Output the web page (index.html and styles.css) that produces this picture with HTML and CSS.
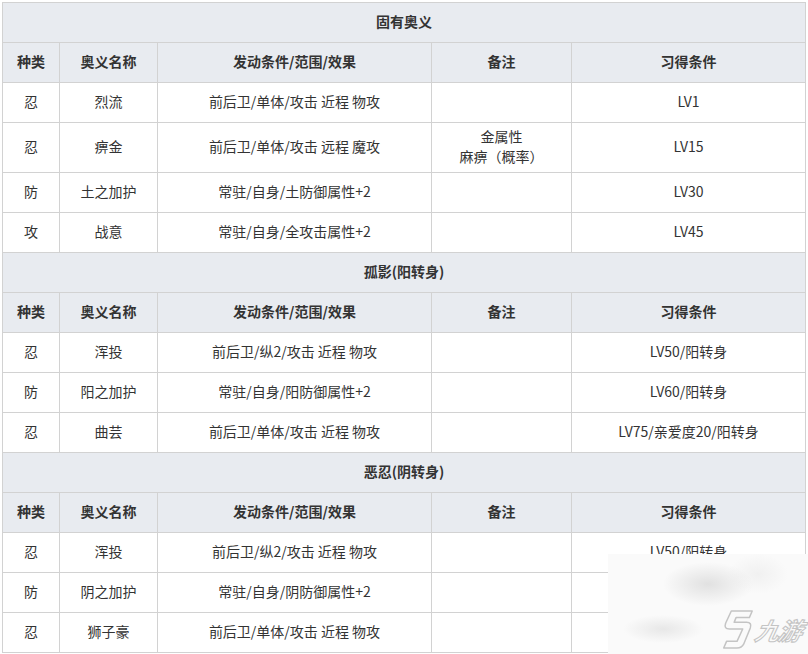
FILE: index.html
```html
<!DOCTYPE html>
<html lang="zh-CN">
<head>
<meta charset="utf-8">
<title>奥义</title>
<link rel="stylesheet" href="styles.css">
</head>
<body>
<div class="page">
<table class="skills">
<colgroup>
<col class="c1"><col class="c2"><col class="c3"><col class="c4"><col class="c5">
</colgroup>
<tbody>
<tr class="title"><th colspan="5">固有奥义</th></tr>
<tr class="head"><th>种类</th><th>奥义名称</th><th>发动条件/范围/效果</th><th>备注</th><th>习得条件</th></tr>
<tr><td>忍</td><td>烈流</td><td>前后卫/单体/攻击 近程 物攻</td><td></td><td>LV1</td></tr>
<tr class="tall"><td>忍</td><td>痹金</td><td>前后卫/单体/攻击 远程 魔攻</td><td>金属性<br>麻痹（概率）</td><td>LV15</td></tr>
<tr><td>防</td><td>土之加护</td><td>常驻/自身/土防御属性+2</td><td></td><td>LV30</td></tr>
<tr><td>攻</td><td>战意</td><td>常驻/自身/全攻击属性+2</td><td></td><td>LV45</td></tr>
<tr class="title"><th colspan="5">孤影(阳转身)</th></tr>
<tr class="head"><th>种类</th><th>奥义名称</th><th>发动条件/范围/效果</th><th>备注</th><th>习得条件</th></tr>
<tr><td>忍</td><td>浑投</td><td>前后卫/纵2/攻击 近程 物攻</td><td></td><td>LV50/阳转身</td></tr>
<tr><td>防</td><td>阳之加护</td><td>常驻/自身/阳防御属性+2</td><td></td><td>LV60/阳转身</td></tr>
<tr><td>忍</td><td>曲芸</td><td>前后卫/单体/攻击 近程 物攻</td><td></td><td>LV75/亲爱度20/阳转身</td></tr>
<tr class="title"><th colspan="5">恶忍(阴转身)</th></tr>
<tr class="head"><th>种类</th><th>奥义名称</th><th>发动条件/范围/效果</th><th>备注</th><th>习得条件</th></tr>
<tr><td>忍</td><td>浑投</td><td>前后卫/纵2/攻击 近程 物攻</td><td></td><td>LV50/阳转身</td></tr>
<tr><td>防</td><td>阴之加护</td><td>常驻/自身/阴防御属性+2</td><td></td><td>LV60/阳转身</td></tr>
<tr><td>忍</td><td>狮子豪</td><td>前后卫/单体/攻击 近程 物攻</td><td></td><td>LV75/亲爱度20/阳转身</td></tr>
</tbody>
</table>
<div class="watermark">
<svg class="wm-icon" viewBox="0 0 40 44" width="38" height="42">
<path d="M14 3 L36 3 L33 10 L19 10 L17 15 L30 15 Q36 15 34 21 L27 38 Q25 42 20 42 L6 42 L9 35 L20 35 L26 22 L12 22 Q6 22 8 16 Z" fill="#fafafa" stroke="#c4c4c4" stroke-width="1.6" stroke-linejoin="round"/>
</svg>
<span class="wm-text">九游</span>
</div>
</div>
</body>
</html>
```
FILE: styles.css
```css
html, body {
  margin: 0;
  padding: 0;
  background: #ffffff;
}
.page {
  position: relative;
  width: 808px;
  height: 654px;
  overflow: hidden;
  padding: 2px 0 0 2px;
  box-sizing: border-box;
}
.skills {
  border-collapse: collapse;
  table-layout: fixed;
  width: 803px;
  font-family: "Noto Sans CJK SC", "Microsoft YaHei", sans-serif;
  font-size: 14px;
  color: #333333;
}
.c1 { width: 57px; }
.c2 { width: 98px; }
.c3 { width: 274px; }
.c4 { width: 140px; }
.c5 { width: 234px; }
.skills th, .skills td {
  border: 1px solid #d2d2d2;
  text-align: center;
  vertical-align: middle;
  height: 40px;
  padding: 0 4px 3px;
  line-height: 20px;
  box-sizing: border-box;
}
.skills th {
  background: #e8ebf0;
  font-weight: 700;
}
.skills tr.tall td {
  height: 50px;
}
.watermark {
  position: absolute;
  left: 608px;
  top: 554px;
  width: 200px;
  height: 100px;
  background:
    radial-gradient(ellipse 45px 22px at 100px 30px, rgba(222,222,222,0.9), rgba(255,255,255,0) 100%),
    radial-gradient(ellipse 40px 14px at 55px 75px, rgba(228,228,228,0.85), rgba(255,255,255,0) 100%),
    radial-gradient(ellipse 30px 20px at 150px 20px, rgba(238,238,238,0.8), rgba(255,255,255,0) 100%),
    #fafafa;
}
.wm-icon {
  position: absolute;
  left: 110px;
  top: 54px;
}
.wm-text {
  position: absolute;
  left: 148px;
  top: 61px;
  font-family: "Noto Sans CJK SC", sans-serif;
  font-size: 24px;
  font-style: italic;
  font-weight: 700;
  line-height: 30px;
  color: #fafafa;
  -webkit-text-stroke: 1.1px #c4c4c4;
  transform: skewX(-12deg);
  letter-spacing: -1px;
}
```
